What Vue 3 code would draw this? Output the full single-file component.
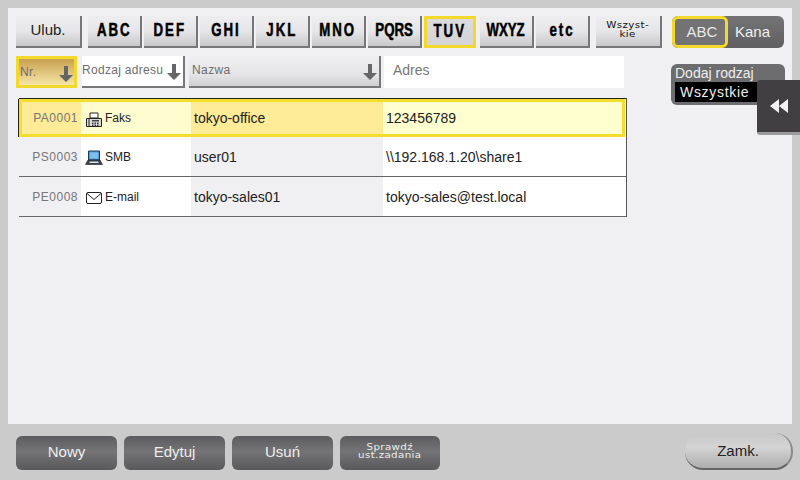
<script setup>
const letters = [
  { label: 'ABC' },
  { label: 'DEF' },
  { label: 'GHI' },
  { label: 'JKL' },
  { label: 'MNO' },
  { label: 'PQRS', tight: true },
  { label: 'TUV', active: true },
  { label: 'WXYZ', tight: true },
  { label: 'etc' }
]

const rows = [
  { no: 'PA0001', icon: 'fax', type: 'Faks', name: 'tokyo-office', addr: '123456789', selected: true },
  { no: 'PS0003', icon: 'smb', type: 'SMB', name: 'user01', addr: '\\\\192.168.1.20\\share1' },
  { no: 'PE0008', icon: 'mail', type: 'E-mail', name: 'tokyo-sales01', addr: 'tokyo-sales@test.local' }
]

const actions = ['Nowy', 'Edytuj', 'Usuń']
</script>

<template>
  <div class="screen">
    <main class="panel">
      <div class="top">
        <button class="btn fav">Ulub.</button>
        <div class="letters">
          <button
            v-for="l in letters"
            :key="l.label"
            class="btn letter"
            :class="{ tight: l.tight, active: l.active }"
          ><span>{{ l.label }}</span></button>
        </div>
        <button class="btn all"><span class="wide">Wszyst-<br />kie</span></button>
        <div class="toggle">
          <span class="tog on">ABC</span>
          <span class="tog off">Kana</span>
        </div>
      </div>

      <div class="mid">
        <div class="list">
          <div class="heads">
            <div class="head h-no sel">
              <span>Nr.</span>
              <svg class="arrow" viewBox="0 0 16 18"><path d="M6 1h4v9h5l-7 7-7-7h5z" /></svg>
            </div>
            <div class="head h-type white">
              <span>Rodzaj adresu</span>
              <svg class="arrow" viewBox="0 0 16 18"><path d="M6 1h4v9h5l-7 7-7-7h5z" /></svg>
            </div>
            <div class="head h-name">
              <span>Nazwa</span>
              <svg class="arrow" viewBox="0 0 16 18"><path d="M6 1h4v9h5l-7 7-7-7h5z" /></svg>
            </div>
            <div class="head-plain">Adres</div>
          </div>

          <div class="table">
            <div v-for="r in rows" :key="r.no" class="row" :class="{ selected: r.selected }">
              <div class="c c-no">{{ r.no }}</div>
              <div class="c c-type">
                <svg v-if="r.icon === 'fax'" class="ico" viewBox="0 0 18 16">
                  <path d="M5 1h8v5H5z" fill="#fff" stroke="#222" />
                  <path d="M1.500 6.500h15v8h-15z" fill="#d8d8d8" stroke="#222" />
                  <path d="M4 6.500v8" stroke="#222" fill="none" />
                  <path d="M7 8h7v1.500H7zM7 10.500h1.500V12H7zM9.500 10.500H11V12H9.500zM12 10.500h1.500V12H12zM7 12.500h1.500V14H7zM9.500 12.500H11V14H9.500zM12 12.500h1.500V14H12z" fill="#444" />
                </svg>
                <svg v-else-if="r.icon === 'smb'" class="ico" viewBox="0 0 18 16">
                  <path d="M3.500 1h11v9h-11z" fill="#4f9ad6" stroke="#1c3a5a" />
                  <path d="M5 2.500h8v6H5z" fill="#7fc0ea" />
                  <path d="M3 10h12l2.500 4.500H.500z" fill="#39424e" stroke="#222" stroke-width=".6" />
                  <path d="M5 11.500h8l.8 1.500H4.200z" fill="#dfe3e8" />
                </svg>
                <svg v-else class="ico" viewBox="0 0 18 16">
                  <rect x="1.500" y="2.500" width="15" height="11" rx="1.500" fill="#fff" stroke="#222" />
                  <path d="M2 3.500l7 6 7-6" fill="none" stroke="#222" />
                </svg>
                <span>{{ r.type }}</span>
              </div>
              <div class="c c-name">{{ r.name }}</div>
              <div class="c c-addr">{{ r.addr }}</div>
            </div>
          </div>
        </div>

        <aside class="side">
          <div class="filter">
            <div class="filter-title">Dodaj rodzaj</div>
            <div class="filter-val">Wszystkie</div>
          </div>
        </aside>
        <div class="tab">
          <svg viewBox="0 0 18 14" class="tab-ico"><path d="M9 0v14L0 7zM18 0v14L9 7z" /></svg>
        </div>
      </div>
    </main>

    <footer class="bottom">
      <button v-for="a in actions" :key="a" class="dark">{{ a }}</button>
      <button class="dark small"><span class="wide">Sprawdź<br />ust.zadania</span></button>
      <button class="close">Zamk.</button>
    </footer>
  </div>
</template>

<style>
html, body { margin: 0; padding: 0; }
</style>

<style scoped>
.screen {
  width: 800px;
  height: 480px;
  background: #cbcbcb;
  padding: 8px;
  box-sizing: border-box;
  display: flex;
  flex-direction: column;
  overflow: hidden;
  font-family: "Liberation Sans", Arial, sans-serif;
}
button { font-family: inherit; padding: 0; cursor: pointer; }

.panel {
  height: 416px;
  flex: none;
  background: #f0eff1;
  padding: 8px 8px 0;
  box-sizing: border-box;
  position: relative;
}

.top { display: flex; height: 32px; }
.btn {
  height: 32px;
  border: 0;
  border-right: 2px solid #77777a;
  border-bottom: 2px solid #77777a;
  background: linear-gradient(#eeedef 0%, #e6e5e7 50%, #c9c8ca 100%);
  box-sizing: border-box;
  color: #111;
}
.fav { width: 66px; font-size: 15px; color: #222; padding-bottom: 3px; }
.letters { display: flex; gap: 2px; margin-left: 6px; }
.letter {
  width: 54px;
  font-size: 17px;
  font-weight: 700;
  letter-spacing: 2.500px;
  -webkit-text-stroke: .5px #000;
  color: #000;
}
.letter span { display: inline-block; transform: scale(.78, 1.05); white-space: nowrap; }
.letter.tight { letter-spacing: 0; }
.letter.active {
  width: 52px;
  margin-right: 2px;
  border: 3px solid #f3d92b;
  background: linear-gradient(#dcdbdd, #d4d3d5);
}
.wide { display: inline-block; transform: scaleX(1.28); white-space: nowrap; }
.all {
  width: 66px;
  margin-left: 6px;
  line-height: 9px;
  letter-spacing: .3px;
  padding-bottom: 2px;
  font-family: "DejaVu Sans", sans-serif;
  font-size: 8px;
}

.toggle {
  width: 112px;
  margin-left: 10px;
  display: flex;
  border-radius: 6px;
  background: linear-gradient(#747476, #5f5f61);
}
.tog {
  flex: 1;
  display: flex;
  align-items: center;
  justify-content: center;
  color: #f0f0f0;
  font-size: 15px;
  padding-bottom: 2px;
  box-sizing: border-box;
}
.tog.off { padding-right: 7px; }
.tog.on {
  flex: none;
  width: 56px;
  border: 3px solid #f3d92b;
  border-radius: 6px;
  background: #737375;
  color: #e8e8e8;
  padding-left: 4px;
}

.mid { display: flex; margin-top: 8px; }
.list { width: 612px; }
.heads { display: flex; height: 32px; }
.head {
  height: 32px;
  box-sizing: border-box;
  border-right: 2px solid #77777a;
  border-bottom: 2px solid #77777a;
  background: linear-gradient(#efeef0, #e6e5e7 60%, #cfced0);
  display: flex;
  align-items: center;
  justify-content: space-between;
  padding: 0 1px 3px 3px;
  color: #6d6d6d;
  font-size: 12px;
  letter-spacing: .4px;
  white-space: nowrap;
}
.h-no { width: 61px; }
.h-type { width: 103px; margin-left: 5px; padding-left: 0; padding-right: 1px; letter-spacing: .3px; }
.h-name { width: 192px; margin-left: 4px; padding-right: 1px; }
.head.white { background: #fff; }
.head.sel {
  border: 3px solid #f3d92b;
  background: linear-gradient(#c9a04f, #f6e6a8);
  padding: 0 0 1px 1px;
}
.arrow { width: 16px; height: 18px; flex: none; margin-top: 4px; }
.arrow path { fill: #666; }
.head-plain {
  width: 240px;
  margin-left: 3px;
  background: #fff;
  height: 32px;
  line-height: 29px;
  padding-left: 9px;
  box-sizing: border-box;
  color: #777;
  font-size: 14px;
}

.table {
  margin: 10px 0 0 3px;
  width: 608px;
  border-right: 1px solid #555;
  border-top: 1px solid #222;
  box-sizing: border-box;
}
.row {
  display: flex;
  height: 40px;
  border-bottom: 1px solid #666;
  box-sizing: border-box;
  position: relative;
  font-size: 14px;
  color: #222;
}
.c { display: flex; align-items: center; box-sizing: border-box; }
.c-no {
  width: 62px;
  background: #f0eff1;
  color: #777;
  font-size: 12px;
  justify-content: flex-end;
  padding-right: 3px;
  letter-spacing: .5px;
}
.c-type { width: 110px; background: #fff; font-size: 12px; padding-left: 4px; gap: 2px; }
.c-name { width: 192px; background: #f0eff1; padding-left: 3px; }
.c-addr { flex: 1; background: #fff; padding-left: 3px; }
.ico { width: 18px; height: 16px; flex: none; margin-top: 3px; }

.row.selected { border: 0; height: 38px; box-shadow: -1px 0 0 #222; }
.row.selected::after {
  content: "";
  position: absolute;
  inset: 0 1px 0 0;
  border: 3px solid #f3de2d;
  pointer-events: none;
}
.selected .c-no { background: #fdeb98; }
.selected .c-type { background: #fffcd0; }
.selected .c-name { background: #fdeb98; }
.selected .c-addr { background: #ffffcf; }

.side { margin-left: 44px; margin-top: 8px; }
.filter {
  width: 114px;
  height: 41px;
  background: #6d6d6f;
  border-radius: 6px;
  padding-left: 4px;
  box-sizing: border-box;
  color: #eee;
  font-size: 14px;
}
.filter-title { height: 18px; line-height: 18px; }
.filter-val {
  background: #000;
  color: #eee;
  height: 20px;
  line-height: 20px;
  padding-left: 5px;
  width: 90px;
  letter-spacing: .7px;
}
.tab {
  position: absolute;
  left: 749px;
  top: 72px;
  width: 43px;
  height: 55px;
  background: #413f42;
  border-bottom: 3px solid #9b9b9b;
  border-radius: 3px 0 0 3px;
  box-sizing: border-box;
  display: flex;
  align-items: center;
  justify-content: flex-start;
  padding-left: 13px;
}
.tab-ico { width: 18px; height: 14px; }
.tab-ico path { fill: #f2f2f2; }

.bottom { display: flex; align-items: flex-start; padding: 12px 0 0 8px; gap: 7px; }
.dark {
  width: 101px;
  height: 34px;
  border: 0;
  border-radius: 6px;
  background: linear-gradient(#5c5c5e, #747476 45%, #59595b);
  color: #eee;
  font-size: 15px;
  padding-bottom: 4px;
}
.dark.small {
  width: 100px;
  font-family: "DejaVu Sans", sans-serif;
  font-size: 8px;
  line-height: 8px;
  letter-spacing: .3px;
  padding-bottom: 2px;
}
.close {
  margin: -3px -1px 0 auto;
  width: 108px;
  height: 37px;
  border: 0;
  border-radius: 18px;
  border-bottom: 2px solid #666;
  border-right: 2px solid #8a8a8a;
  background: linear-gradient(#c8c8c8, #d4d4d4 40%, #aeaeae);
  color: #222;
  font-size: 15px;
  box-sizing: border-box;
}
</style>
